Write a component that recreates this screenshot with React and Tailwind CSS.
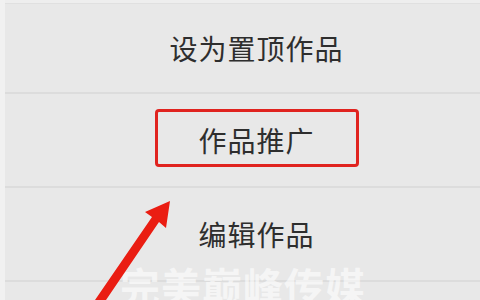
const font = { fontFamily: '"Noto Sans CJK SC", "Noto Sans", sans-serif' };

// One row of the action sheet
function SheetRow({ height, children }) {
  return (
    <div className={`flex items-center justify-center pl-[28px] ${height}`}>
      {children}
    </div>
  );
}

function Divider() {
  return <div className="h-[2px] bg-[#dcdcdc]" />;
}

export default function App() {
  return (
    <div
      className="relative w-[480px] h-[300px] overflow-hidden bg-[#e8e8e8] flex"
      style={font}
    >
      {/* left edge strip */}
      <div className="w-[5px] bg-[#f1f1f1]" />

      <div className="flex-1 flex flex-col">
        <div className="h-[4px] bg-[#eeeeee] border-b border-[#e0e0e0]" />

        <SheetRow height="h-[88px]">
          <span className="text-[28px] tracking-[1px] text-[#2e2e2e]">设为置顶作品</span>
        </SheetRow>
        <Divider />

        <SheetRow height="h-[92px]">
          <div className="-mt-[4px] flex items-center justify-center w-[204px] h-[58px] border-[3px] border-[#e0231f] rounded-[4px]">
            <span className="mt-[4px] text-[28px] tracking-[1px] text-[#2e2e2e]">作品推广</span>
          </div>
        </SheetRow>
        <Divider />

        <SheetRow height="h-[92px]">
          <span className="text-[28px] tracking-[1px] text-[#2e2e2e]">编辑作品</span>
        </SheetRow>
        <Divider />

        <div className="flex-1" />
      </div>

      {/* watermark */}
      <div className="absolute left-[120px] top-[265px] text-[40px] font-bold leading-none text-white/60 tracking-[1px]">
        完美巅峰传媒
      </div>

      {/* red annotation arrow */}
      <svg className="absolute left-0 top-0" width="480" height="300" viewBox="0 0 480 300">
        <polygon
          points="170,201 166,228 159,222 106,300 95,300 152,217 145,212"
          fill="#ea1d12"
        />
      </svg>
    </div>
  );
}
